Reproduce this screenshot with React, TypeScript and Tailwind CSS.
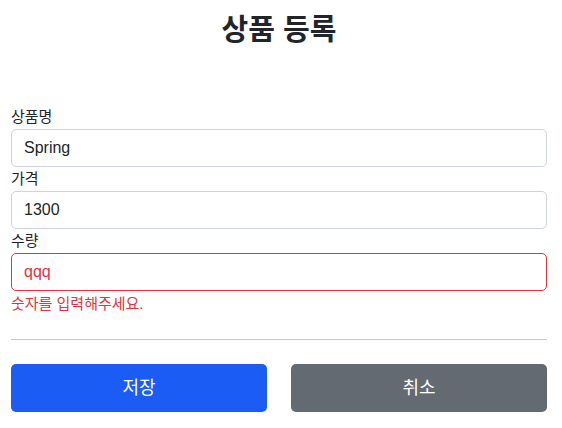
export default function App() {
  return (
    <div
      className="w-[562px] bg-white text-[#212529]"
      style={{ fontFamily: '"Liberation Sans", "Noto Sans CJK KR", sans-serif' }}
    >
      <div className="pl-[11px] pr-[15px]">
        {/* Header */}
        <div className="flex justify-center pt-[10px] pb-[56px]">
          <h2 className="text-[29px] font-bold leading-[40px]">상품 등록</h2>
        </div>

        <form className="flex flex-col">
          <div>
            <label className="block text-[15px] leading-[22px]">상품명</label>
            <input
              defaultValue="Spring"
              className="mt-[1px] block w-full h-[38px] px-3 rounded-[5px] border border-[#ced4da] text-[16px] outline-none"
            />
          </div>
          <div className="mt-[1px]">
            <label className="block text-[15px] leading-[22px]">가격</label>
            <input
              defaultValue="1300"
              className="mt-[1px] block w-full h-[38px] px-3 rounded-[5px] border border-[#ced4da] text-[16px] outline-none"
            />
          </div>
          <div className="mt-[1px]">
            <label className="block text-[15px] leading-[22px]">수량</label>
            <input
              defaultValue="qqq"
              className="mt-[1px] block w-full h-[38px] px-3 rounded-[5px] border border-[#dc3545] text-[16px] text-[#dc3545] outline-none"
            />
            <div className="mt-[2px] text-[15px] leading-[22px] text-[#dc3545]">숫자를 입력해주세요.</div>
          </div>

          <hr className="mt-[24px] border-0 border-t border-[#c8c8c8]" />

          <div className="mt-[24px] flex gap-[24px]">
            <button
              type="button"
              className="flex-1 h-[48px] rounded-[5px] bg-[#1b5cf5] text-white text-[18px]"
            >
              저장
            </button>
            <button
              type="button"
              className="flex-1 h-[48px] rounded-[5px] bg-[#636a71] text-white text-[18px]"
            >
              취소
            </button>
          </div>
        </form>
      </div>
    </div>
  );
}
